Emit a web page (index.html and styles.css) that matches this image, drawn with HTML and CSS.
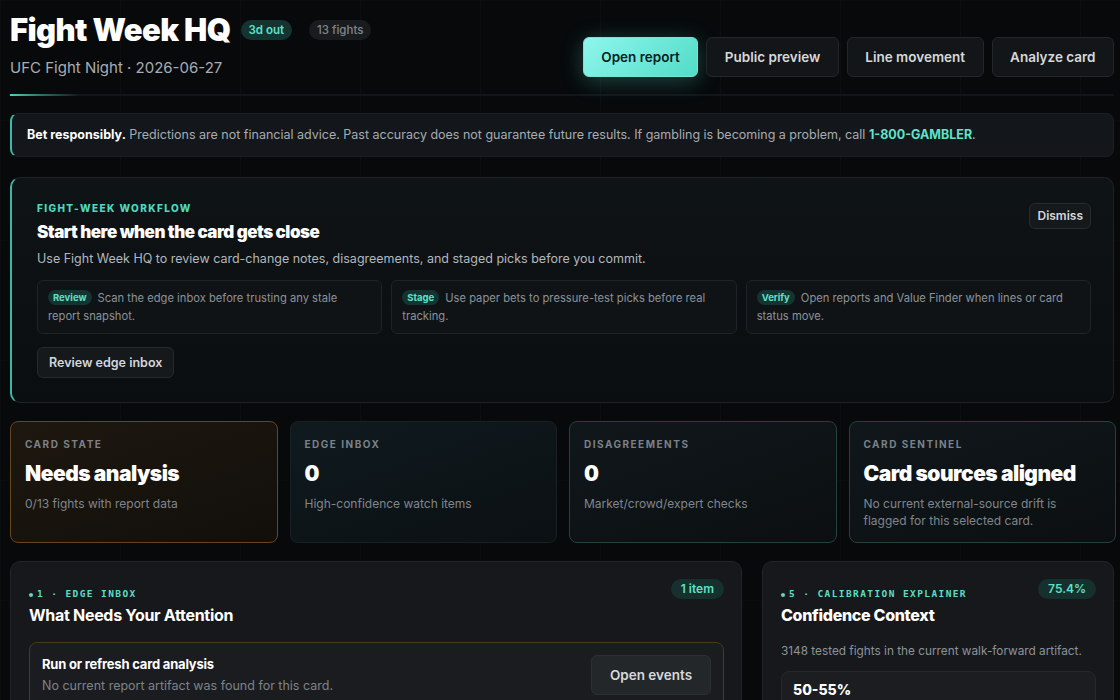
FILE: index.html
```html
<!DOCTYPE html>
<html lang="en">
<head>
  <meta charset="UTF-8" />
  <meta name="viewport" content="width=device-width, initial-scale=1" />
  <title>Fight Week HQ</title>
  <link rel="stylesheet" href="styles.css">
</head>
<body>
  <div class="page">
    <header class="top">
      <div class="top-left">
        <div class="title-row">
          <h1>Fight Week HQ</h1>
          <span class="pill pill-teal">3d out</span>
          <span class="pill pill-gray">13 fights</span>
        </div>
        <div class="subtitle">UFC Fight Night · 2026-06-27</div>
      </div>
      <div class="actions">
        <button class="btn btn-primary">Open report</button>
        <button class="btn">Public preview</button>
        <button class="btn">Line movement</button>
        <button class="btn">Analyze card</button>
      </div>
    </header>
    <div class="top-rule"></div>

    <div class="notice">
      <b>Bet responsibly.</b> Predictions are not financial advice. Past accuracy does not guarantee future results. If gambling is becoming a problem, call <a class="hotline">1-800-GAMBLER</a>.
    </div>

    <section class="workflow">
      <div class="workflow-head">
        <div>
          <div class="eyebrow">Fight-week workflow</div>
          <h2>Start here when the card gets close</h2>
        </div>
        <button class="btn-small">Dismiss</button>
      </div>
      <p class="workflow-desc">Use Fight Week HQ to review card-change notes, disagreements, and staged picks before you commit.</p>
      <div class="steps">
        <div class="step"><span class="tag">Review</span>Scan the edge inbox before trusting any stale report snapshot.</div>
        <div class="step"><span class="tag">Stage</span>Use paper bets to pressure-test picks before real tracking.</div>
        <div class="step"><span class="tag">Verify</span>Open reports and Value Finder when lines or card status move.</div>
      </div>
      <button class="btn-small btn-inbox">Review edge inbox</button>
    </section>

    <section class="stats">
      <div class="stat stat-warn">
        <div class="stat-label">Card state</div>
        <div class="stat-value">Needs analysis</div>
        <div class="stat-sub">0/13 fights with report data</div>
      </div>
      <div class="stat stat-blue">
        <div class="stat-label">Edge inbox</div>
        <div class="stat-value">0</div>
        <div class="stat-sub">High-confidence watch items</div>
      </div>
      <div class="stat stat-teal">
        <div class="stat-label">Disagreements</div>
        <div class="stat-value">0</div>
        <div class="stat-sub">Market/crowd/expert checks</div>
      </div>
      <div class="stat stat-teal">
        <div class="stat-label">Card sentinel</div>
        <div class="stat-value">Card sources aligned</div>
        <div class="stat-sub">No current external-source drift is flagged for this selected card.</div>
      </div>
    </section>

    <section class="panels">
      <div class="panel">
        <div class="panel-head">
          <div>
            <div class="kicker"><span class="dot"></span>1 · Edge inbox</div>
            <h3>What Needs Your Attention</h3>
          </div>
          <span class="count">1 item</span>
        </div>
        <div class="inbox-item">
          <div>
            <div class="item-title">Run or refresh card analysis</div>
            <div class="item-sub">No current report artifact was found for this card.</div>
          </div>
          <button class="btn btn-item">Open events</button>
        </div>
      </div>

      <div class="panel">
        <div class="panel-head">
          <div>
            <div class="kicker"><span class="dot"></span>5 · Calibration explainer</div>
            <h3 class="heavy">Confidence Context</h3>
          </div>
          <span class="count">75.4%</span>
        </div>
        <p class="panel-note">3148 tested fights in the current walk-forward artifact.</p>
        <div class="bucket">
          <div class="bucket-range">50-55%</div>
        </div>
      </div>
    </section>
  </div>
</body>
</html>
```

FILE: styles.css
```css
body {
  margin: 0;
  font-family: Inter, "Noto Sans", sans-serif;
  color: #e6e9ec;
  background-color: #07090b;
  background-image:
    linear-gradient(90deg, rgba(255,255,255,0.018) 1px, transparent 1px),
    linear-gradient(rgba(255,255,255,0.012) 1px, transparent 1px);
  background-size: 120px 120px;
  overflow: hidden;
}

.page {
  padding: 12px 6px 0 10px;
}

button {
  font-family: inherit;
  cursor: pointer;
}

/* header */
.top {
  display: flex;
  justify-content: space-between;
  align-items: flex-end;
}

.title-row {
  display: flex;
  align-items: center;
  gap: 17px;
}

h1 {
  margin: 0 -7px 0 0;
  font-size: 31px;
  font-weight: 900;
  letter-spacing: -0.6px;
  line-height: 36px;
  color: #fff;
}

.pill {
  font-size: 11.5px;
  font-weight: 600;
  padding: 3px 8px;
  border-radius: 10px;
  line-height: 14px;
}

.pill-teal {
  background: #133430;
  color: #5fe0c8;
}

.pill-gray {
  background: #191c1f;
  color: #80868c;
  font-weight: 500;
}

.subtitle {
  margin-top: 11px;
  font-size: 15px;
  color: #a8adb3;
  line-height: 18px;
}

.actions {
  display: flex;
  gap: 8px;
}

.btn {
  height: 40px;
  padding: 0 17.5px;
  font-size: 13.5px;
  font-weight: 600;
  color: #d6d9dc;
  background: #131619;
  border: 1px solid #23272b;
  border-radius: 6px;
}

.btn-primary {
  color: #08201c;
  background: linear-gradient(135deg, #8ff6ec, #52dcc8);
  border-color: #6fe8d8;
  box-shadow: 0 4px 22px rgba(80, 220, 200, 0.3);
}

.top-rule {
  height: 2px;
  margin-top: 17px;
  background: linear-gradient(90deg, #4fd1bd 0, rgba(79,209,189,0.5) 30px, rgba(79,209,189,0) 70px), #121519;
}

/* responsible gambling note */
.notice {
  margin-top: 17px;
  padding: 13px 14px 13px 15px;
  font-size: 12.5px;
  color: #a7acb1;
  background: #13161a;
  border: 1px solid #1c2024;
  border-left: 2px solid #3fb8a8;
  border-radius: 8px;
  line-height: 16px;
}

.notice b {
  color: #fff;
  font-weight: 700;
}

.hotline {
  color: #5fe3c9;
  font-weight: 700;
}

/* workflow card */
.workflow {
  margin-top: 20px;
  padding: 24px 22px 24px 25px;
  background: linear-gradient(180deg, #0e1316, #0b0e11);
  border: 1px solid #1d2327;
  border-left: 2px solid #3fb5a5;
  border-radius: 10px;
}

.workflow-head {
  display: flex;
  justify-content: space-between;
  align-items: flex-start;
}

.eyebrow {
  font-size: 10px;
  font-weight: 800;
  letter-spacing: 1.4px;
  text-transform: uppercase;
  color: #4fd8c0;
  line-height: 12px;
}

h2 {
  margin: 8px 0 0;
  font-size: 17px;
  font-weight: 900;
  letter-spacing: -0.5px;
  color: #fff;
  line-height: 20px;
}

.btn-small {
  padding: 5px 7px;
  font-size: 12px;
  font-weight: 600;
  color: #d4d7da;
  background: #16191c;
  border: 1px solid #262a2f;
  border-radius: 6px;
  line-height: 14px;
}

.workflow-head .btn-small {
  margin-top: 1px;
}

.workflow-desc {
  margin: 9px 0 0;
  font-size: 12.5px;
  color: #b3b8bd;
  line-height: 16px;
}

.steps {
  display: grid;
  grid-template-columns: repeat(3, 1fr);
  gap: 9px;
  margin-top: 13px;
}

.step {
  padding: 8px 10px 8px;
  min-height: 35px;
  font-size: 11.2px;
  color: #8c9298;
  background: #0f1316;
  border: 1px solid #1e2328;
  border-radius: 6px;
  line-height: 18px;
}

.tag {
  display: inline-block;
  margin-right: 6px;
  padding: 0 5px;
  font-size: 9.5px;
  font-weight: 700;
  color: #5fe0c8;
  background: #133430;
  border-radius: 8px;
  line-height: 15px;
  vertical-align: 1px;
}

.btn-inbox {
  margin-top: 13px;
  padding: 7px 11px;
  font-size: 12.5px;
  line-height: 15px;
}

/* stat cards */
.stats {
  display: grid;
  grid-template-columns: repeat(4, 1fr);
  gap: 12px;
  margin-top: 18px;
  margin-right: -2px;
}

.stat {
  height: 122px;
  box-sizing: border-box;
  padding: 16px 14px;
  border-radius: 8px;
  border: 1px solid #1e2529;
  background: linear-gradient(160deg, #111619, #0b0e11);
}

.stat-warn {
  border-color: #654620;
  background: linear-gradient(160deg, #1d170f, #120f0b);
}

.stat-blue {
  border-color: #182126;
  background: linear-gradient(160deg, #0f1a1f, #0b1013);
}

.stat-teal {
  border-color: #24403f;
  background: linear-gradient(160deg, #10171a, #0b0f12);
}

.stat-label {
  font-size: 10px;
  font-weight: 700;
  letter-spacing: 1.5px;
  text-transform: uppercase;
  color: #7b8187;
  line-height: 12px;
}

.stat-value {
  margin-top: 12px;
  font-size: 21px;
  font-weight: 900;
  letter-spacing: -0.5px;
  color: #fff;
  line-height: 24px;
}

.stat-sub {
  margin-top: 9px;
  font-size: 12px;
  color: #80868c;
  line-height: 17px;
}

/* bottom panels */
.panels {
  display: grid;
  grid-template-columns: 732px 1fr;
  gap: 20px;
  margin-top: 18px;
}

.panel {
  height: 200px;
  padding: 16px 17px 0 18px;
  background: #16181b;
  border: 1px solid #212428;
  border-radius: 10px;
}

.panel-head {
  display: flex;
  justify-content: space-between;
  align-items: flex-start;
}

.kicker {
  display: flex;
  align-items: center;
  margin-top: 10px;
  font-family: "DejaVu Sans Mono", "Liberation Mono", monospace;
  font-size: 9.5px;
  font-weight: 700;
  letter-spacing: 1.4px;
  text-transform: uppercase;
  color: #5fdcc5;
  line-height: 12px;
}

.dot {
  width: 4px;
  height: 4px;
  margin: 2px 4px 0 0;
  border-radius: 50%;
  background: #5fd8c2;
}

h3 {
  margin: 5px 0 0;
  font-size: 16px;
  font-weight: 700;
  letter-spacing: -0.3px;
  color: #fff;
  line-height: 20px;
}

h3.heavy {
  font-size: 16px;
  font-weight: 800;
}

.count {
  margin-top: 1px;
  padding: 3px 10px;
  font-size: 12px;
  font-weight: 600;
  color: #5fe0c8;
  background: #16302d;
  border-radius: 10px;
  line-height: 14px;
}

.inbox-item {
  display: flex;
  justify-content: space-between;
  align-items: center;
  margin-top: 17px;
  padding: 12px 12px 12px 12px;
  background: #1a1c1f;
  border: 1px solid #4a3a22;
  border-radius: 8px;
}

.item-title {
  font-size: 13px;
  font-weight: 700;
  letter-spacing: -0.2px;
  color: #fff;
  line-height: 16px;
}

.item-sub {
  margin-top: 6px;
  font-size: 12.5px;
  color: #7d8389;
  line-height: 16px;
}

.btn-item {
  width: 120px;
  padding: 0;
  background: #24272a;
  border-color: #2c3034;
}

.panel-note {
  margin: 18px 0 0;
  font-size: 11.8px;
  color: #8d9398;
  line-height: 16px;
}

.bucket {
  margin-top: 12px;
  padding: 10px 11px;
  height: 60px;
  background: #1b1d20;
  border: 1px solid #25282c;
  border-radius: 8px;
}

.bucket-range {
  font-size: 14px;
  font-weight: 800;
  color: #fff;
  line-height: 16px;
}
```
